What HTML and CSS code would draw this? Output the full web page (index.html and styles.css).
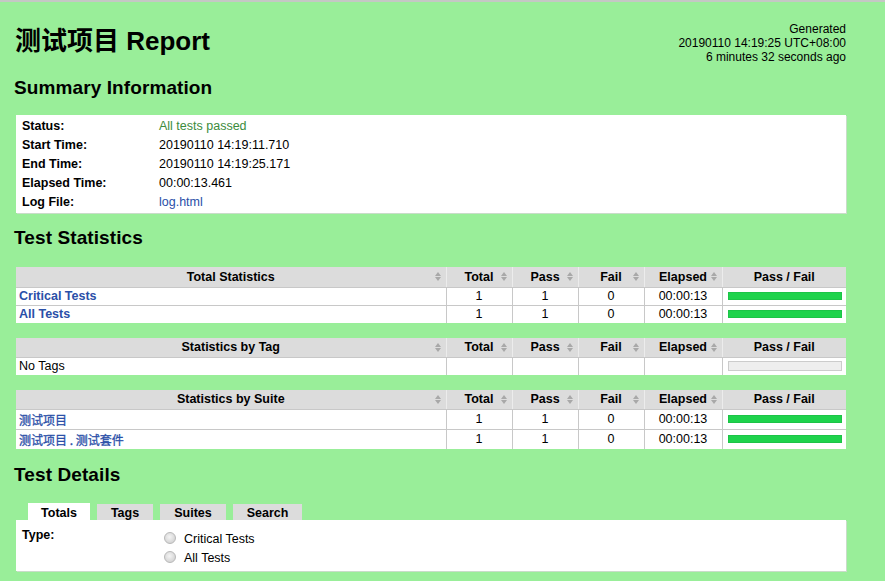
FILE: index.html
```html
<!DOCTYPE html>
<html lang="en">
<head>
    <meta charset="UTF-8">
    <title>测试项目 Report</title>
    <link rel="stylesheet" href="styles.css">
</head>
<body>
    <div class="page">
        <div class="header">
            <h1>测试项目 Report</h1>
            <div class="generated">
                Generated<br>
                20190110 14:19:25 UTC+08:00<br>
                6 minutes 32 seconds ago
            </div>
        </div>

        <h2 class="first">Summary Information</h2>
        <table class="summary">
            <tr><th>Status:</th><td class="passed">All tests passed</td></tr>
            <tr><th>Start Time:</th><td>20190110 14:19:11.710</td></tr>
            <tr><th>End Time:</th><td>20190110 14:19:25.171</td></tr>
            <tr><th>Elapsed Time:</th><td>00:00:13.461</td></tr>
            <tr><th>Log File:</th><td><a href="#">log.html</a></td></tr>
        </table>

        <h2 class="stats-title">Test Statistics</h2>
        <table class="stats first-stats">
            <tr class="head">
                <th class="name">Total Statistics<i class="sort"></i></th>
                <th>Total<i class="sort"></i></th>
                <th>Pass<i class="sort"></i></th>
                <th>Fail<i class="sort"></i></th>
                <th>Elapsed<i class="sort"></i></th>
                <th>Pass / Fail</th>
            </tr>
            <tr>
                <td class="name"><a href="#">Critical Tests</a></td>
                <td>1</td><td>1</td><td>0</td><td>00:00:13</td>
                <td class="graph"><div class="bar"></div></td>
            </tr>
            <tr>
                <td class="name"><a href="#">All Tests</a></td>
                <td>1</td><td>1</td><td>0</td><td>00:00:13</td>
                <td class="graph"><div class="bar"></div></td>
            </tr>
        </table>

        <table class="stats">
            <tr class="head">
                <th class="name">Statistics by Tag<i class="sort"></i></th>
                <th>Total<i class="sort"></i></th>
                <th>Pass<i class="sort"></i></th>
                <th>Fail<i class="sort"></i></th>
                <th>Elapsed<i class="sort"></i></th>
                <th>Pass / Fail</th>
            </tr>
            <tr>
                <td class="name plain">No Tags</td>
                <td></td><td></td><td></td><td></td>
                <td class="graph"><div class="bar empty"></div></td>
            </tr>
        </table>

        <table class="stats">
            <tr class="head">
                <th class="name">Statistics by Suite<i class="sort"></i></th>
                <th>Total<i class="sort"></i></th>
                <th>Pass<i class="sort"></i></th>
                <th>Fail<i class="sort"></i></th>
                <th>Elapsed<i class="sort"></i></th>
                <th>Pass / Fail</th>
            </tr>
            <tr class="tall">
                <td class="name"><a href="#">测试项目</a></td>
                <td>1</td><td>1</td><td>0</td><td>00:00:13</td>
                <td class="graph"><div class="bar"></div></td>
            </tr>
            <tr class="tall">
                <td class="name"><a href="#">测试项目 . 测试套件</a></td>
                <td>1</td><td>1</td><td>0</td><td>00:00:13</td>
                <td class="graph"><div class="bar"></div></td>
            </tr>
        </table>

        <h2>Test Details</h2>
        <ul class="tabs">
            <li class="tab active">Totals</li>
            <li class="tab">Tags</li>
            <li class="tab">Suites</li>
            <li class="tab">Search</li>
        </ul>
        <div class="details">
            <div class="type">Type:</div>
            <div class="options">
                <label class="option"><span class="radio"></span>Critical Tests</label>
                <label class="option"><span class="radio"></span>All Tests</label>
            </div>
        </div>
    </div>
</body>
</html>
```

FILE: styles.css
```css
*{
    margin: 0;
    padding: 0;
    box-sizing: border-box;
}
html,body{
    height: 100%;
}
body{
    background-color: #99ee99;
    border-top: 2px solid #c4c8c4;
    font-family: "Liberation Sans", Arial, "Noto Sans CJK SC", sans-serif;
    font-size: 12.5px;
    color: #000;
    overflow: hidden;
}
a{
    color: #2a4fa8;
    text-decoration: none;
}
.page{
    width: 832px;
    margin-left: 14px;
    padding-top: 20px;
}
.header{
    display: flex;
    justify-content: space-between;
    align-items: flex-start;
}
.header h1{
    margin-top: 4px;
    font-size: 26px;
    line-height: 30px;
    font-weight: bold;
    padding-left: 1px;
}
.generated{
    text-align: right;
    font-size: 12px;
    line-height: 14px;
}
h2{
    margin-top: 15px;
    font-size: 19px;
    line-height: 22px;
    font-weight: bold;
    letter-spacing: 0.1px;
}
h2.first{
    margin-top: 13px;
}
h2.stats-title{
    margin-top: 14px;
}
.summary{
    margin: 16px 0 0 2px;
    width: 830px;
    background: #fff;
    border-collapse: collapse;
    border-top: 2px solid #fff;
    border-bottom: 1px solid #fff;
    box-shadow: 1px 1px 0 #c9dcc9;
}
.summary th,
.summary td{
    height: 19px;
    line-height: 19px;
    text-align: left;
    vertical-align: middle;
}
.summary th{
    width: 143px;
    padding-left: 6px;
    font-weight: bold;
}
.summary td.passed{
    color: #3c8c3c;
}
.stats{
    margin: 15px 0 0 2px;
    width: 830px;
    table-layout: fixed;
    border-collapse: collapse;
    background: #fff;
}
.stats.first-stats{
    margin-top: 18px;
}
.stats th{
    position: relative;
    height: 19px;
    background: #dcdcdc;
    font-weight: bold;
    text-align: center;
    border-left: 1px solid #ececec;
    border-bottom: 1px solid #c8c8c8;
}
.first-stats .head th{
    height: 20px;
}
.stats th:nth-child(1){ width: 430px; border-left: none; }
.stats th:nth-child(2){ width: 66px; }
.stats th:nth-child(3){ width: 66px; }
.stats th:nth-child(4){ width: 66px; }
.stats th:nth-child(5){ width: 78px; }
.stats th:nth-child(6){ width: 124px; }
.stats td{
    height: 18px;
    text-align: center;
    border-left: 1px solid #c8c8c8;
    border-top: 1px solid #c8c8c8;
}
.stats tr.head + tr td{
    border-top: none;
}
.stats tr.tall td{
    height: 20px;
}
.stats td.name{
    text-align: left;
    padding-left: 3px;
    border-left: none;
    font-weight: bold;
}
.stats td.name.plain{
    font-weight: normal;
}
.stats tr.tall td.name a{
    font-family: "Noto Sans CJK SC", sans-serif;
    font-size: 12px;
    font-weight: normal;
    -webkit-text-stroke: 0.3px #2a4fa8;
}
.stats td.graph{
    padding: 0 4px 0 5px;
}
.bar{
    height: 8px;
    background: #1ed34c;
    border: 1px solid #1cc447;
}
.bar.empty{
    height: 10px;
    background: #eeeeee;
    border: 1px solid #cccccc;
}
.sort{
    position: absolute;
    right: 4px;
    top: 5px;
    width: 7px;
    height: 9px;
}
.sort::before,
.sort::after{
    content: "";
    position: absolute;
    left: 0;
    border-left: 3.5px solid transparent;
    border-right: 3.5px solid transparent;
}
.sort::before{
    top: 0;
    border-bottom: 4px solid #a8a8a8;
}
.sort::after{
    bottom: 0;
    border-top: 4px solid #a8a8a8;
}
.tabs{
    display: flex;
    gap: 7px;
    margin: 17px 0 0 14px;
    list-style: none;
}
.tab{
    height: 16px;
    margin-top: 1px;
    padding: 0 13px;
    background: #dcdcdc;
    font-weight: bold;
    line-height: 18px;
    text-align: center;
}
.tab:nth-child(1){ width: 62px; }
.tab:nth-child(2){ width: 56px; }
.tab:nth-child(3){ width: 66px; }
.tab:nth-child(4){ width: 69px; }
.tab.active{
    height: 17px;
    margin-top: 0;
    background: #fff;
    line-height: 20px;
}
.details{
    display: flex;
    margin-left: 2px;
    width: 830px;
    height: 51px;
    background: #fff;
    box-shadow: 1px 1px 0 #c9dcc9;
    padding: 8px 0 0 6px;
}
.type{
    width: 142px;
    font-weight: bold;
}
.options{
    display: flex;
    flex-direction: column;
    padding-top: 1px;
}
.option{
    display: flex;
    align-items: center;
    height: 19px;
    font-size: 12.5px;
}
.radio{
    width: 12px;
    height: 12px;
    margin-right: 8px;
    margin-top: -2px;
    border-radius: 50%;
    border: 1px solid #b8b8b8;
    background: radial-gradient(circle at 45% 40%, #f4f4f4 0, #d6d6d6 70%);
}
```
